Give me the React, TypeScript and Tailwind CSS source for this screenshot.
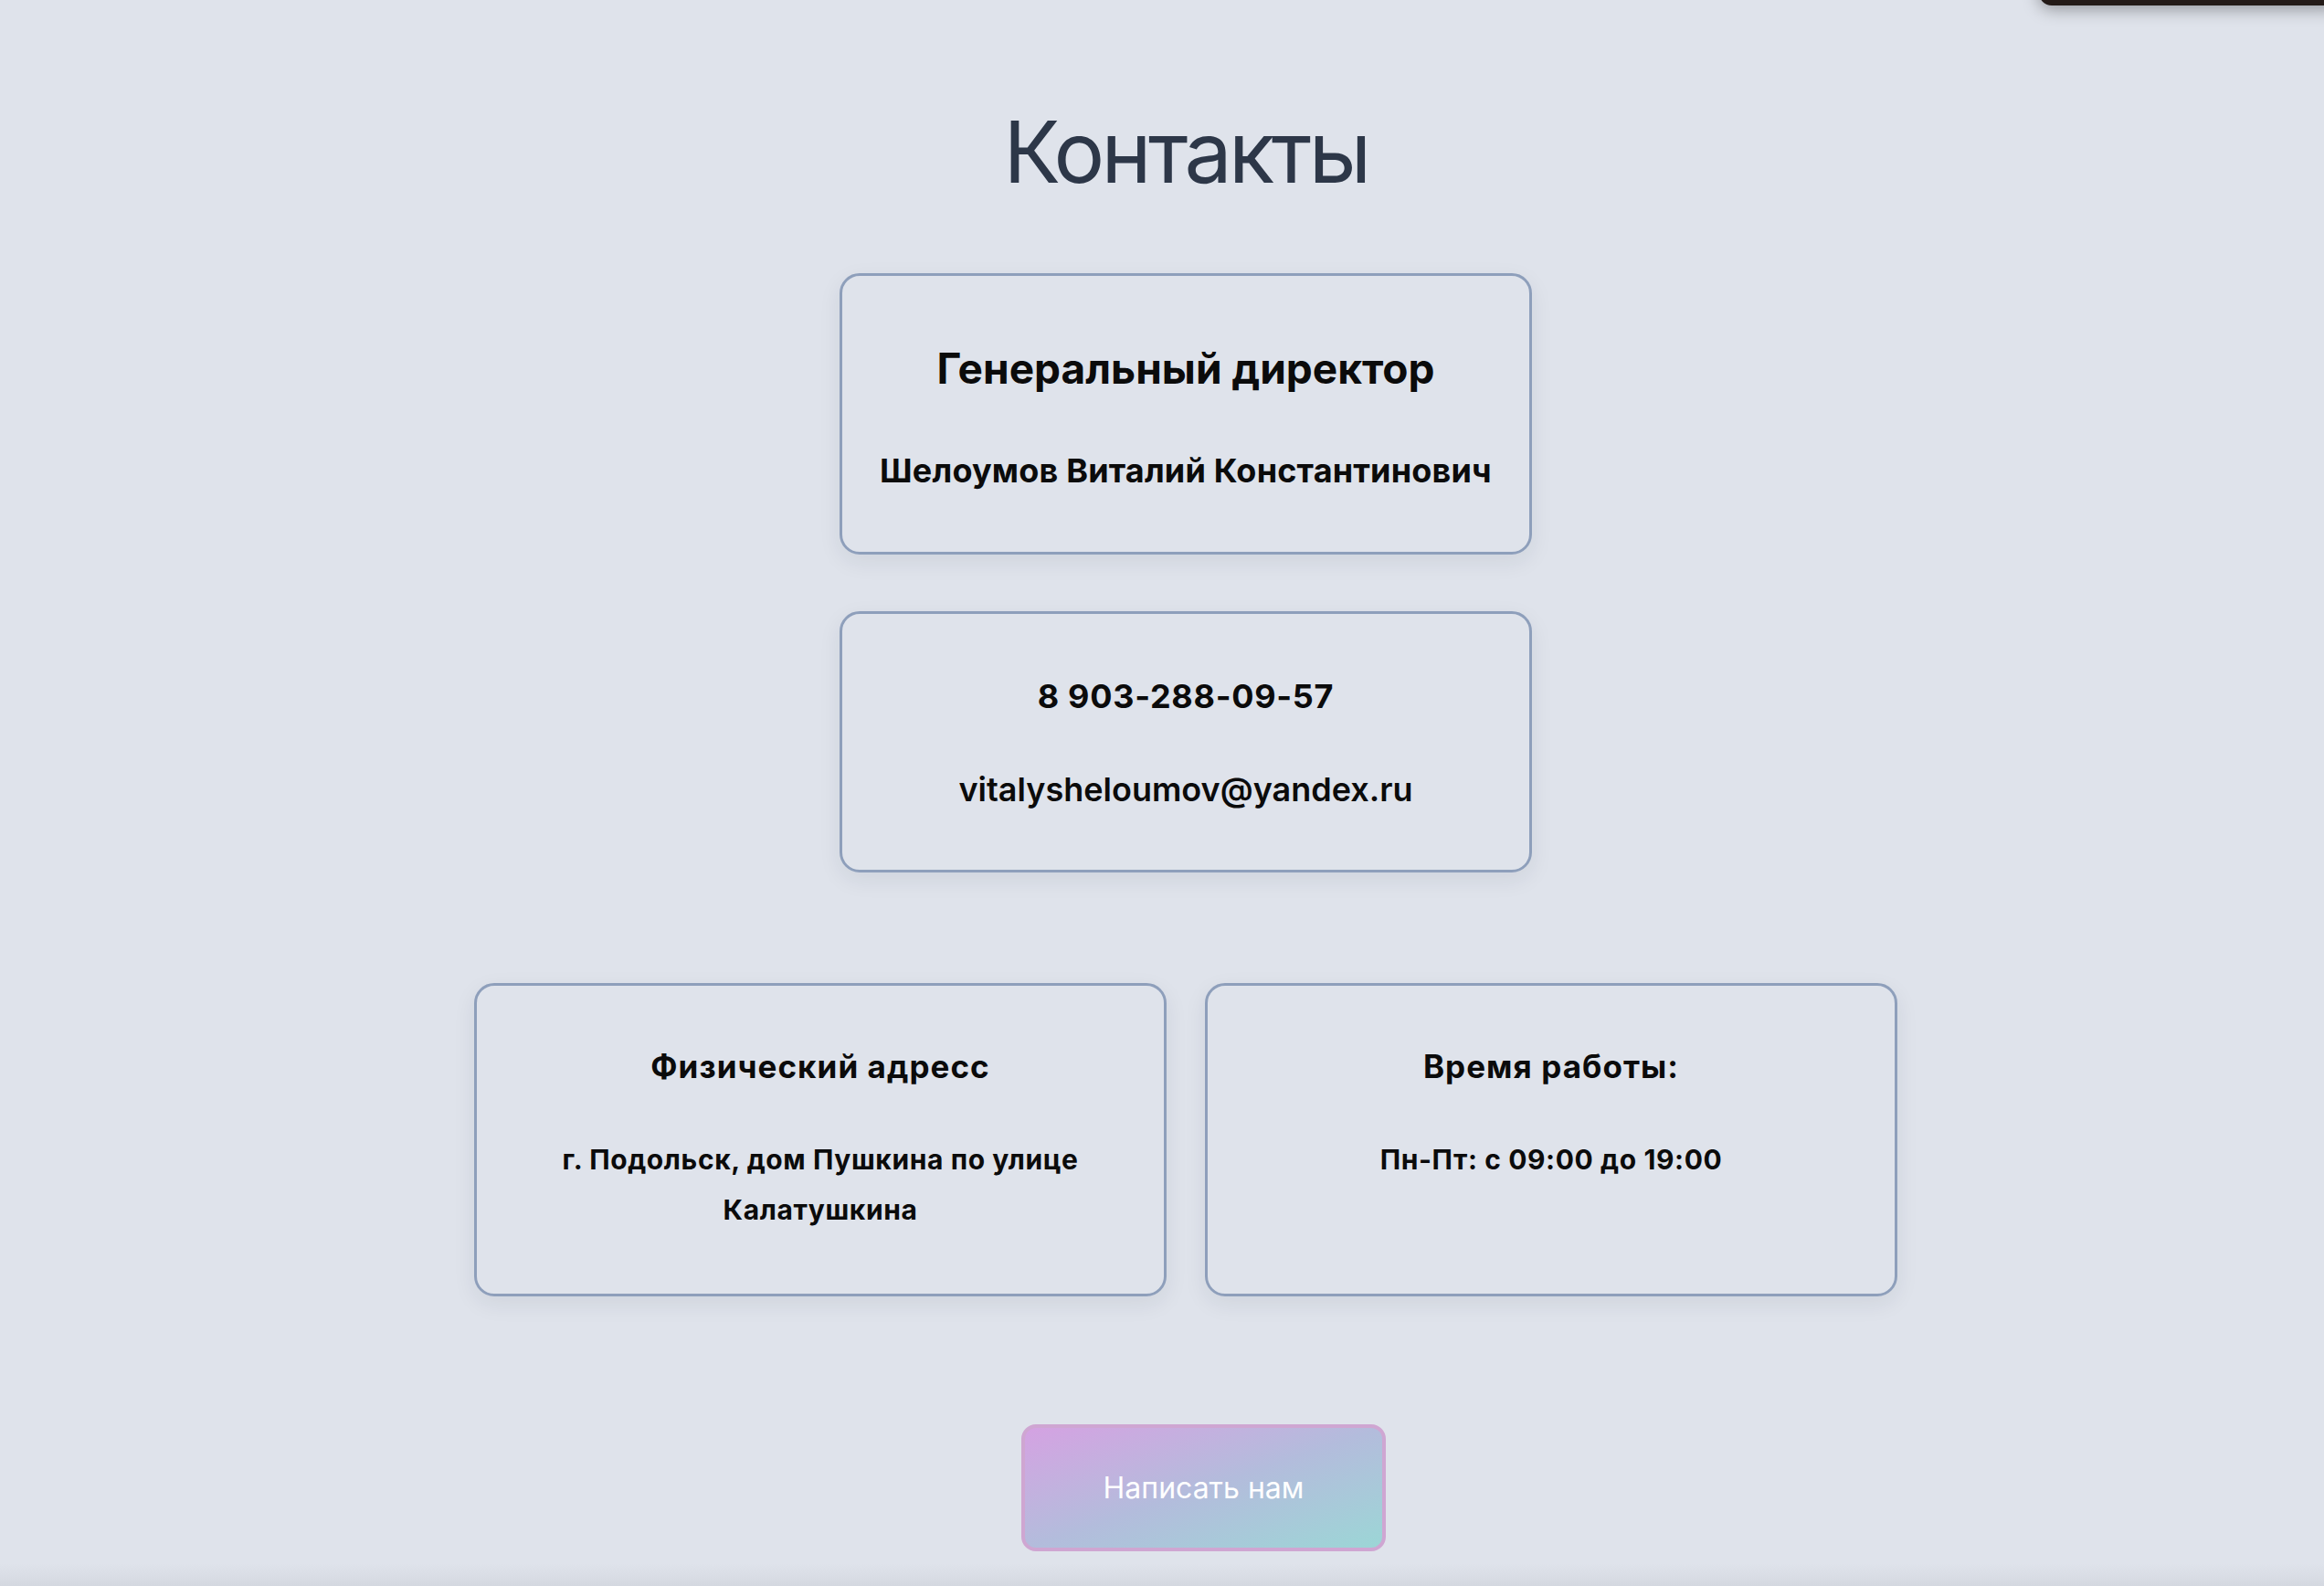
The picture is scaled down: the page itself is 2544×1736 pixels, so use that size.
export default function App() {
  return (
    <div className="relative h-[1736px] overflow-hidden bg-[#dfe3eb] font-['Inter','Noto_Sans',sans-serif]">
      {/* dark panel peeking in from the top right */}
      <div className="absolute right-[-20px] top-[-40px] h-[46px] w-[332px] rounded-[14px] bg-[#231a17] shadow-[0_4px_18px_rgba(0,0,0,0.35)]" />

      <main className="flex flex-col items-center pl-[52px] pt-[120px]">
        <h1 className="text-[93px] font-normal leading-none tracking-[-0.04em] text-[#2d3748]">Контакты</h1>

        <div className="mt-[86px] flex w-[758px] flex-col items-center gap-[71px] rounded-[22px] border-[3px] border-[#8e9fbb] pt-[78px] pb-[71px] shadow-[0_8px_24px_rgba(30,41,59,0.08)]">
          <h2 className="text-[46px] font-bold leading-none text-[#0b0b0b]">Генеральный директор</h2>
          <p className="text-[36px] font-bold leading-none tracking-[0.005em] text-[#0b0b0b]">Шелоумов Виталий Константинович</p>
        </div>

        <div className="mt-[62px] flex w-[758px] flex-col items-center gap-[66px] rounded-[22px] border-[3px] border-[#8e9fbb] pt-[72px] pb-[70px] shadow-[0_8px_24px_rgba(30,41,59,0.08)]">
          <p className="text-[36px] font-bold leading-none tracking-[0.02em] text-[#0b0b0b]">8 903-288-09-57</p>
          <p className="text-[36px] font-semibold leading-none text-[#0b0b0b]">vitalysheloumov@yandex.ru</p>
        </div>

        <div className="mt-[121px] grid w-[1558px] grid-cols-2 gap-[42px]">
          <div className="flex h-[343px] flex-col items-center rounded-[22px] border-[3px] border-[#8e9fbb] px-[40px] pt-[71px] shadow-[0_8px_24px_rgba(30,41,59,0.08)]">
            <h3 className="text-[35px] font-bold leading-none tracking-[0.03em] text-[#0b0b0b]">Физический адресс</h3>
            <p className="mt-[57px] text-center text-[30px] font-bold leading-[55px] tracking-[0.02em] text-[#0b0b0b]">
              г. Подольск, дом Пушкина по улице Калатушкина
            </p>
          </div>
          <div className="flex h-[343px] flex-col items-center rounded-[22px] border-[3px] border-[#8e9fbb] px-[40px] pt-[71px] shadow-[0_8px_24px_rgba(30,41,59,0.08)]">
            <h3 className="text-[35px] font-bold leading-none tracking-[0.03em] text-[#0b0b0b]">Время работы:</h3>
            <p className="mt-[57px] text-center text-[30px] font-bold leading-[55px] tracking-[0.02em] text-[#0b0b0b]">
              Пн-Пт: с 09:00 до 19:00
            </p>
          </div>
        </div>

        <button className="mt-[140px] ml-[39px] flex h-[139px] w-[399px] items-center justify-center rounded-[16px] border-[4px] border-[#cfa6d2] bg-gradient-to-br from-[#d4a2e2] via-[#b3bcdc] to-[#9bd6d6] text-[32px] font-normal text-white">
          Написать нам
        </button>
      </main>

      {/* soft shade along the bottom edge */}
      <div className="absolute inset-x-0 bottom-0 h-[24px] bg-gradient-to-b from-[#dfe3eb] to-[#d4d8e0]" />
    </div>
  );
}
